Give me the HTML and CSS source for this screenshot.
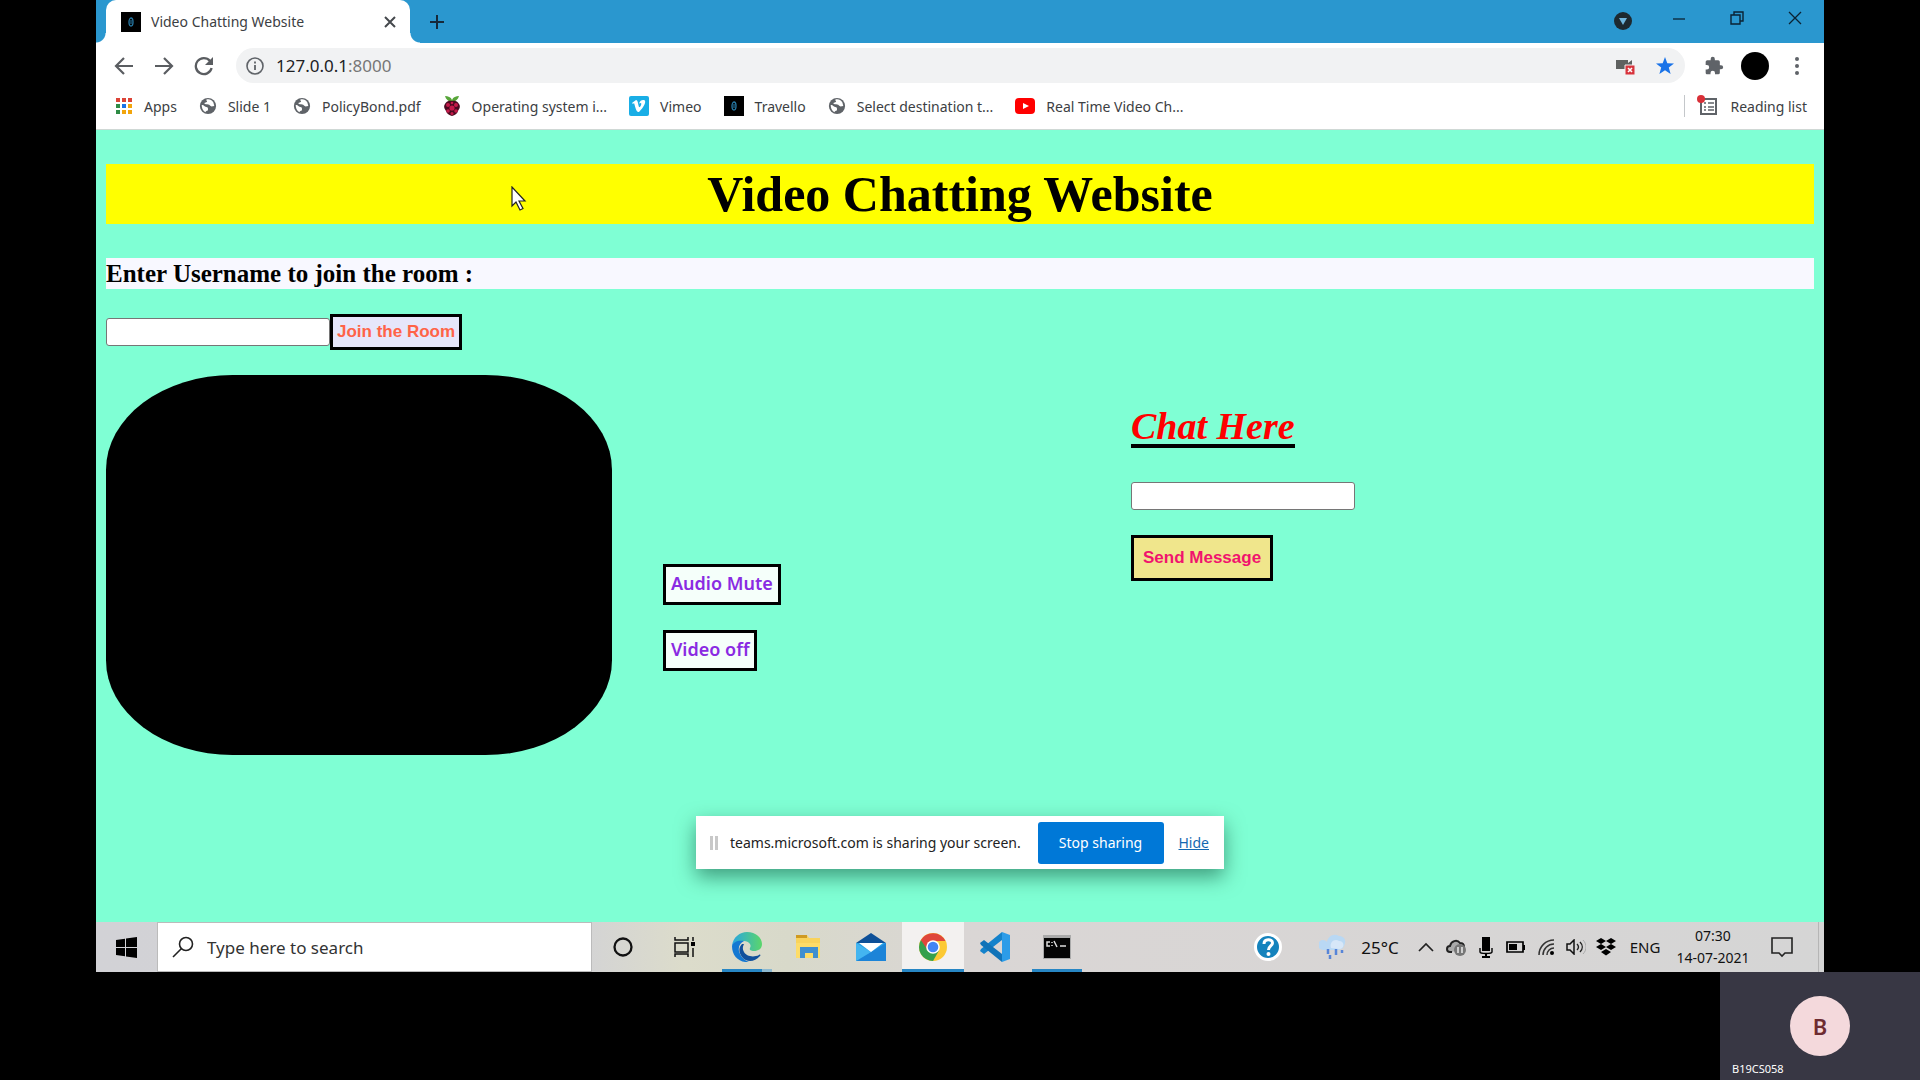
FILE: index.html
```html
<!DOCTYPE html>
<html lang="en">
<head>
<meta charset="utf-8">
<title>Video Chatting Website</title>
<link rel="stylesheet" href="styles.css">
</head>
<body>
<svg class="defs" aria-hidden="true">
  <symbol id="globe" viewBox="0 0 20 20"><circle cx="10" cy="10" r="9" fill="#5f6368"/><path d="M3 9c3 0 3 2 5 2s2 1 2 3-2 1-3 3C4 15 3 12 3 9zM8 3c3-1 6 0 8 3l1 4c-2 0-3 1-4 0s-2-2-4-2-3 0-3-1 3-1 3-2-1-1-1-2z" fill="#fff"/></symbol>
  <symbol id="zero" viewBox="0 0 20 20"><path fill="#000" d="M0 0h20v20H0z"/><ellipse cx="10" cy="10" rx="2" ry="4" fill="none" stroke="#277ba8" stroke-width="1.3"/><path d="M10 8v4" stroke="#277ba8"/></symbol>
</svg>
<div class="stage">
  <main class="screen">
    <header class="tabs">
      <div class="tab">
        <svg class="i20"><use href="#zero"/></svg>
        <span class="tab-title">Video Chatting Website</span>
        <button class="plain" aria-label="Close tab"><svg width="12" height="12" viewBox="0 0 12 12"><path d="M1 1l10 10M11 1L1 11" stroke="#45494d" stroke-width="2"/></svg></button>
      </div>
      <button class="plain new-tab" aria-label="New tab"><svg width="16" height="16" viewBox="0 0 16 16"><path d="M8 1v14M1 8h14" stroke="#16293a" stroke-width="2"/></svg></button>
      <div class="window-buttons">
        <button class="plain media" aria-label="Media"><svg width="18" height="18" viewBox="0 0 18 18"><circle cx="9" cy="9" r="9" fill="#1d2930"/><path d="M5 6h8l-4 7z" fill="#6fb5dc"/></svg></button>
        <button class="plain" aria-label="Minimize"><svg width="14" height="14" viewBox="0 0 14 14"><path d="M1 8h12" stroke="#0b2233" stroke-width="1.3"/></svg></button>
        <button class="plain" aria-label="Restore"><svg width="14" height="14" viewBox="0 0 14 14"><path d="M1 4h9v9H1zM4 4V1h9v9h-3" fill="none" stroke="#0b2233" stroke-width="1.4"/></svg></button>
        <button class="plain" aria-label="Close"><svg width="14" height="14" viewBox="0 0 14 14"><path d="M1 1l12 12M13 1L1 13" stroke="#0b2233" stroke-width="1.3"/></svg></button>
      </div>
    </header>
    <nav class="toolbar">
      <button class="plain" aria-label="Back"><svg width="20" height="20" viewBox="0 0 20 20"><path d="M19 10H3M10 2l-8 8 8 8" fill="none" stroke="#5a5d61" stroke-width="2.2"/></svg></button>
      <button class="plain" aria-label="Forward"><svg width="20" height="20" viewBox="0 0 20 20"><path d="M1 10h16M10 2l8 8-8 8" fill="none" stroke="#5a5d61" stroke-width="2.2"/></svg></button>
      <button class="plain" aria-label="Reload"><svg width="20" height="20" viewBox="0 0 20 20"><path d="M16 5a8 8 0 1 0 1.6 7" fill="none" stroke="#5a5d61" stroke-width="2.3"/><path d="M19 1v8h-8z" fill="#5a5d61"/></svg></button>
      <div class="address">
        <svg width="18" height="18" viewBox="0 0 18 18"><circle cx="9" cy="9" r="8" fill="none" stroke="#5f6368" stroke-width="1.6"/><path d="M9 8v5M9 4.500v2" stroke="#5f6368" stroke-width="1.8"/></svg>
        <span class="url">127.0.0.1<span class="port">:8000</span></span>
        <svg class="camera" width="20" height="20" viewBox="0 0 20 20"><path d="M0 4h12v3l4-3v9H0z" fill="#5f6160"/><path d="M9 9h10v10H9z" fill="#d8343c" stroke="#f1f2f2"/><path d="M12 12l4 4M16 12l-4 4" stroke="#fff" stroke-width="1.6"/></svg>
        <svg width="20" height="20" viewBox="0 0 20 20"><path d="M10 1l2.300 6.200 6.700.3-5.200 4.100 1.800 6.400L10 14.300 4.400 18l1.800-6.400L1 7.500l6.700-.3z" fill="#1a73e8"/></svg>
      </div>
      <button class="plain puzzle" aria-label="Extensions"><svg width="20" height="20" viewBox="0 0 24 24"><path fill="#5f6368" d="M20.500 11H19V7a2 2 0 0 0-2-2h-4V3.500a2.500 2.500 0 0 0-5 0V5H4a2 2 0 0 0-2 2v3.800h1.500a2.700 2.700 0 0 1 0 5.400H2V20c0 1.100.9 2 2 2h3.800v-1.500a2.700 2.700 0 0 1 5.400 0V22H17a2 2 0 0 0 2-2v-4h1.500a2.500 2.500 0 0 0 0-5z"/></svg></button>
      <button class="plain profile" aria-label="Profile"></button>
      <button class="plain menu" aria-label="Menu"><svg width="4" height="18" viewBox="0 0 4 18"><circle cx="2" cy="2" r="2"/><circle cx="2" cy="9" r="2"/><circle cx="2" cy="16" r="2"/></svg></button>
    </nav>
    <nav class="bookmarks">
      <a href="#"><svg width="18" height="18" viewBox="0 0 18 18"><path fill="#dc4437" d="M1 1h4v4H1zM7 1h4v4H7zM13 1h4v4h-4z"/><path fill="#2e8b45" d="M1 7h4v4H1zM1 13h4v4H1z"/><path fill="#1a73e8" d="M7 7h4v4H7z"/><path fill="#f2a50c" d="M13 7h4v4h-4zM7 13h4v4H7zM13 13h4v4h-4z"/></svg>Apps</a>
      <a href="#"><svg class="i18"><use href="#globe"/></svg>Slide 1</a>
      <a href="#"><svg class="i18"><use href="#globe"/></svg>PolicyBond.pdf</a>
      <a href="#"><svg width="18" height="20" viewBox="0 0 18 20"><path d="M9 5C6 6 3 4 2 0c3 0 6 1 7 4 1-3 4-4 7-4-1 4-4 6-7 5z" fill="#57a639"/><path d="M9 5c5-1 6 2 7 3 2 3 0 5-1 7-1 3-3 4-6 5-3-1-5-2-6-5-1-2-3-4-1-7 1-1 2-4 7-3z" fill="#4b0a20"/><g fill="#c51a4a"><circle cx="9" cy="12" r="2.600"/><circle cx="5" cy="9" r="2"/><circle cx="13" cy="9" r="2"/><circle cx="5" cy="15" r="1.800"/><circle cx="13" cy="15" r="1.800"/><circle cx="9" cy="17.500" r="1.500"/><circle cx="9" cy="7" r="1.300"/></g></svg>Operating system i...</a>
      <a href="#"><svg width="20" height="20" viewBox="0 0 20 20"><rect y="0" width="20" height="20" rx="2" fill="#19aee6"/><path d="M3 7l4-3c2 0 2 4 3 7 1 1 3-3 2-4l-2 .5c1-3 3-4 5-3.500 3 1 0 7-5 12-3 1-4-7-5-9L4 8z" fill="#fff"/></svg>Vimeo</a>
      <a href="#"><svg class="i20"><use href="#zero"/></svg>Travello</a>
      <a href="#"><svg class="i18"><use href="#globe"/></svg>Select destination t...</a>
      <a href="#"><svg width="20" height="20" viewBox="0 0 20 20"><rect y="2" width="20" height="16" rx="4" fill="#f00"/><path d="M8 7l6 3-6 3z" fill="#fff"/></svg>Real Time Video Ch...</a>
      <a href="#" class="reading"><svg width="22" height="22" viewBox="0 0 22 22"><path d="M4 4h15v15H4z" fill="none" stroke="#5f6368" stroke-width="2"/><path d="M7 8h2M7 12h2M7 15h2M11 8h6M11 12h6M11 15h6" stroke="#5f6368" stroke-width="1.500"/><circle cx="4" cy="4" r="4" fill="#d93038"/></svg>Reading list</a>
    </nav>

    <section class="page">
      <h1>Video Chatting Website</h1>
      <h3><label for="username">Enter Username to join the room :</label></h3>
      <form class="join">
        <input class="field" id="username" type="text">
        <button class="btn join-btn" type="button">Join the Room</button>
      </form>
      <div class="room">
        <div class="video"></div>
        <div class="controls">
          <button class="btn control" type="button">Audio Mute</button>
          <button class="btn control" type="button">Video off</button>
        </div>
        <form class="chat">
          <h2><label for="message">Chat Here</label></h2>
          <input class="field" id="message" type="text">
          <button class="btn send" type="button">Send Message</button>
        </form>
      </div>
      <svg class="cursor" width="16" height="25" viewBox="0 0 16 25"><path d="M1 1v19l4-4 4 8 3-1.500-4-7.500h6z" fill="#fff" stroke="#222" stroke-width="1.200"/></svg>
      <aside class="sharing">
        <span class="grip"></span>
        <span class="sharing-text">teams.microsoft.com is sharing your screen.</span>
        <button class="stop" type="button">Stop sharing</button>
        <a class="hide" href="#">Hide</a>
      </aside>
    </section>

    <footer class="taskbar">
      <button class="plain start" aria-label="Start"><svg width="21" height="21" viewBox="0 0 21 21"><path d="M0 3l9-1.300V10H0zM10 1.500L21 0v10H10zM0 11h9v8.300L0 18zM10 11h11v10l-11-1.500z"/></svg></button>
      <div class="search">
        <svg width="22" height="22" viewBox="0 0 22 22"><circle cx="14" cy="8" r="6.500" fill="none" stroke="#222" stroke-width="1.600"/><path d="M9.500 12.500L1 21" stroke="#222" stroke-width="1.600"/></svg>
        <input type="text" placeholder="Type here to search" aria-label="Search">
      </div>
      <div class="apps">
        <button class="plain" aria-label="Cortana"><svg width="20" height="20" viewBox="0 0 20 20"><circle cx="10" cy="10" r="8.500" fill="none" stroke="#111" stroke-width="2.300"/></svg></button>
        <button class="plain" aria-label="Task view"><svg width="22" height="20" viewBox="0 0 22 20"><path d="M1 0v3h13V0M1 6h13v9H1zM1 20v-3h13v3M19 0v4M19 11v9" fill="none" stroke="#111" stroke-width="1.500"/><path d="M17 5h4v4h-4z"/></svg></button>
        <button class="plain open partial" aria-label="Edge"><svg width="30" height="30" viewBox="0 0 30 30"><defs><linearGradient id="eg"><stop offset="0" stop-color="#2aa6e0"/><stop offset="1" stop-color="#5bd66b"/></linearGradient></defs><path d="M0 14C1 5 8 0 15 0c9 0 15 6 15 12 0 5-4 7-8 7-3 0-5-1-4-3 2-3-1-7-6-7C6 9 1 11 0 14z" fill="url(#eg)"/><path d="M0 14c1-4 6-6 12-5-4 2-6 6-5 10 1 5 5 9 10 11C7 31 0 24 0 14z" fill="#1478d2"/><path d="M10 12c-4 4-3 9 0 13 4 5 12 6 18-1 1-1 0-2-1-1-6 3-13 1-15-3-2-3-1-6 0-8z" fill="#11509c"/></svg></button>
        <button class="plain" aria-label="File Explorer"><svg width="30" height="26" viewBox="0 0 30 26"><path d="M2 3l1-2h10l2 3h11v20H2z" fill="#f9d35b"/><path d="M2 1h11v3H2z" fill="#cf9a22"/><path d="M2 9h24v15H2z" fill="#fddc68"/><path d="M6 24V13h18v11h-5v-5h-8v5z" fill="#3f8fd0"/></svg></button>
        <button class="plain" aria-label="Mail"><svg width="30" height="28" viewBox="0 0 30 28"><path d="M0 10L15 0l15 10z" fill="#0d5098"/><path d="M0 10h30v18H0z" fill="#28a2e6"/><path d="M0 28L30 10v18z" fill="#1c84d8"/><path d="M0 28V10l15 9z" fill="#44b5f0"/><path d="M3 10h24L15 19z" fill="#fff"/></svg></button>
        <button class="plain open active" aria-label="Chrome"><svg width="28" height="28" viewBox="0 0 28 28"><circle cx="14" cy="14" r="14" fill="#fcc934"/><path d="M14 14L1.900 7A14 14 0 0 0 14 28l6-10.500z" fill="#34a04d"/><path d="M1.900 7A14 14 0 0 1 26.500 8H14l-5.500 9z" fill="#df463b"/><circle cx="14" cy="14" r="6.800" fill="#fff"/><circle cx="14" cy="14" r="5.300" fill="#4285f4"/></svg></button>
        <button class="plain" aria-label="Visual Studio Code"><svg width="30" height="30" viewBox="0 0 30 30"><path d="M22 0v8L4 22l-4-3 1-2z" fill="#1482cb"/><path d="M22 30v-8L4 8l-4 3 1 2z" fill="#1173b8"/><path d="M22 0l8 3v24l-8 3z" fill="#2c9ce8"/></svg></button>
        <button class="plain open" aria-label="Command Prompt"><svg width="28" height="24" viewBox="0 0 28 24"><path d="M0 0h28v24H0z" fill="#aaa"/><path d="M1 3h26v20H1z" fill="#050505"/><path d="M7 7H4v4h3M9 7v1M9 10v1M11 6l3 6M17 11h6" fill="none" stroke="#ddd" stroke-width="1.500"/></svg></button>
      </div>
      <div class="tray">
        <svg class="help" width="28" height="28" viewBox="0 0 28 28"><circle cx="14" cy="14" r="12.500" fill="#1583bd" stroke="#fff" stroke-width="3"/><path d="M10 11c0-5.500 8.500-5.500 8.500-1 0 3-4 3-4 7" fill="none" stroke="#fff" stroke-width="3"/><circle cx="14.500" cy="21" r="2" fill="#fff"/></svg>
        <svg class="weather" width="30" height="30" viewBox="0 0 30 30"><path d="M4 18a5 5 0 0 1 0-10c2 0 3 1 4 2 1-6 7-9 12-6 4 0 7 3 6 7-1 5-4 7-8 7z" fill="#b9d8f4"/><path d="M12 16c-2-6 4-10 8-7 6 0 6 8 0 8z" fill="#d7e7f8"/><path d="M9 17v5M17 17v6M11 23v4M23 18v3" stroke="#5785d8" stroke-width="2.500"/></svg>
        <span class="temp">25°C</span>
        <span class="cell"><svg width="16" height="10" viewBox="0 0 16 10"><path d="M1 9l7-7 7 7" fill="none" stroke="#222" stroke-width="1.700"/></svg></span>
        <span class="cell"><svg width="20" height="18" viewBox="0 0 20 18"><path d="M6 14H4c-4 0-4-6 0-6 1-5 7-7 10-3 2 0 4 1 4 4" fill="#aaa" stroke="#222" stroke-width="2"/><circle cx="14" cy="12" r="6" fill="#777"/><path d="M12 9v6M16 9v6" stroke="#fff" stroke-width="1.300"/></svg></span>
        <span class="cell"><svg width="14" height="22" viewBox="0 0 14 22"><path d="M3 1h8v14H3zM6 17h2v4H6zM3 20h8v2H3z"/><path d="M1 12v4c0 2 12 2 12 0v-4" fill="none" stroke="#000" stroke-width="1.400"/></svg></span>
        <span class="cell"><svg width="20" height="12" viewBox="0 0 20 12"><path d="M1 1h16v10H1z" fill="none" stroke="#000" stroke-width="1.700"/><path d="M3 3h8v6H3zM17 4h2v5h-2z"/></svg></span>
        <span class="cell"><svg width="18" height="18" viewBox="0 0 18 18"><path d="M2 17A15 15 0 0 1 17 2M6 17A11 11 0 0 1 17 6M10 17a7 7 0 0 1 7-7" fill="none" stroke="#333" stroke-width="1.500"/><circle cx="15" cy="15" r="2"/></svg></span>
        <span class="cell"><svg width="20" height="16" viewBox="0 0 20 16"><path d="M1 5h3l4-4v14l-4-4H1z" fill="none" stroke="#111" stroke-width="1.500"/><path d="M11 5c2 2 2 4 0 6M14 3c3 3 3 7 0 10" fill="none" stroke="#222" stroke-width="1.400"/><path d="M17 1c4 4 4 10 0 14" fill="none" stroke="#aaa"/></svg></span>
        <span class="cell"><svg width="20" height="18" viewBox="0 0 20 18"><path d="M5 0l5 3-5 3-5-3zM15 0l5 3-5 3-5-3zM5 6l5 3-5 3-5-3zM15 6l5 3-5 3-5-3zM10 11l5 3-5 3.500L5 14z"/></svg></span>
        <span class="lang">ENG</span>
        <span class="clock"><span>07:30</span><span>14-07-2021</span></span>
        <span class="notice"><svg width="22" height="21" viewBox="0 0 22 21"><path d="M1 1h20v15h-7l-3 3-3-3H1z" fill="none" stroke="#222" stroke-width="1.600"/></svg></span>
      </div>
    </footer>
  </main>
  <aside class="participant">
    <div class="avatar">B</div>
    <span class="name">B19CS058</span>
  </aside>
</div>
</body>
</html>
```
FILE: styles.css
```css
* { box-sizing: border-box; }

body {
  margin: 0;
  background: #000;
  color: #3c4043;
  font-family: "Noto Sans", "Open Sans", sans-serif;
  font-size: 14px;
}

svg { display: block; flex: none; }
.defs { position: absolute; width: 0; height: 0; }
.i18 { width: 18px; height: 18px; }
.i20 { width: 20px; height: 20px; }

.plain {
  display: flex;
  align-items: center;
  justify-content: center;
  padding: 0;
  border: 0;
  background: none;
}

.stage {
  display: flex;
  flex-direction: column;
  min-height: 100vh;
}

.screen {
  flex: 1;
  display: flex;
  flex-direction: column;
  margin: 0 5%;
  background: #fff;
}

/* Browser frame */
.tabs {
  display: flex;
  height: 43px;
  padding-left: 10px;
  background: #2a97cf;
}

.tab {
  position: relative;
  display: flex;
  align-items: center;
  width: 304px;
  padding: 0 14px 0 15px;
  gap: 10px;
  border-radius: 10px 10px 0 0;
  background: #fff;
}

.tab::before,
.tab::after {
  content: "";
  position: absolute;
  bottom: 0;
  width: 10px;
  height: 10px;
}
.tab::before { left: -10px; background: radial-gradient(circle at 0 0, transparent 9px, #fff 10px); }
.tab::after { right: -10px; background: radial-gradient(circle at 100% 0, transparent 9px, #fff 10px); }
.tab-title { flex: 1; }
.new-tab { margin-left: 19px; }

.window-buttons {
  display: flex;
  margin-left: auto;
  height: 36px;
}
.window-buttons .plain { width: 58px; }
.window-buttons .media { width: 54px; padding-top: 6px; }

.toolbar {
  display: flex;
  align-items: center;
  height: 45px;
  padding: 0 25px 0 18px;
}
.toolbar > .plain:nth-child(-n+3) { margin-right: 20px; }

.address {
  flex: 1;
  display: flex;
  align-items: center;
  height: 35px;
  margin-left: 2px;
  padding: 0 10px 0 10px;
  gap: 12px;
  border-radius: 18px;
  background: #f1f2f3;
}
.url { flex: 1; color: #202124; font-size: 17px; }
.port { color: #777; }
.camera { margin-right: 7px; }
.puzzle { margin-left: 19px; }
.profile { width: 28px; height: 28px; margin: 0 26px 0 17px; border-radius: 50%; background: #000; }
.menu { fill: #5f6368; }

.bookmarks {
  display: flex;
  align-items: center;
  height: 42px;
  padding: 0 17px 5px 19px;
  gap: 22px;
  border-bottom: 1px solid #cfd8d5;
}
.bookmarks a {
  display: flex;
  align-items: center;
  gap: 11px;
  color: #3c4043;
  text-decoration: none;
  white-space: nowrap;
}
.bookmarks .reading {
  margin-left: auto;
  padding-left: 12px;
  border-left: 1px solid #c4c7ca;
}

/* Chat page */
.page {
  position: relative;
  flex: 1;
  padding: 34px 10px 40px;
  background: #7fffd4;
  color: #000;
  font-family: "Liberation Serif", serif;
}

h1 {
  margin: 0 0 34px;
  background: #ff0;
  font-size: 50px;
  line-height: 60px;
  text-align: center;
}

h3 {
  margin: 0 0 25px;
  background: #f8f8ff;
  font-size: 25px;
  line-height: 31px;
}

.join { display: flex; align-items: center; margin-bottom: 25px; }

.field {
  width: 224px;
  height: 28px;
  border: 1px solid #767676;
  border-radius: 3px;
  background: #fff;
}

.btn {
  border: 3px solid #000;
  padding: 0 4px;
  font-weight: bold;
  white-space: nowrap;
}

.join-btn {
  height: 36px;
  background: #e6e6fa;
  color: #ff6347;
  font-family: "Liberation Sans", sans-serif;
  font-size: 17px;
}

.room {
  display: grid;
  grid-template-columns: 557fr 468fr 683fr;
  align-items: start;
}

.video {
  width: calc(100% - 51px);
  aspect-ratio: 4 / 3;
  border-radius: 25%;
  background: #000;
}

.controls {
  display: flex;
  flex-direction: column;
  align-items: flex-start;
  gap: 25px;
  padding-top: 189px;
}
.control {
  height: 41px;
  padding: 0 5px 3px;
  background: #f5fffa;
  color: #8a2be2;
  font-family: "Noto Sans", sans-serif;
  font-size: 18px;
  font-weight: 600;
}

.chat { display: flex; flex-direction: column; align-items: flex-start; padding-top: 34px; }

h2 {
  margin: 0 0 34px;
  border-bottom: 4px solid #000;
  color: #f00;
  font-size: 38px;
  font-style: italic;
  line-height: 35px;
}

.send {
  height: 46px;
  margin-top: 25px;
  padding: 0 9px;
  background: #f0e68c;
  color: #f0146e;
  font-family: "Liberation Sans", sans-serif;
  font-size: 17px;
}

.cursor { position: absolute; left: 415px; top: 56px; }

.sharing {
  position: absolute;
  left: 50%;
  bottom: 53px;
  transform: translateX(-50%);
  display: flex;
  align-items: center;
  width: 528px;
  height: 53px;
  padding: 0 15px 0 14px;
  background: #fff;
  box-shadow: 0 8px 20px rgba(0, 60, 40, 0.5);
  color: #222;
  font-family: "Noto Sans", sans-serif;
  white-space: nowrap;
}
.grip { width: 8px; height: 14px; margin-right: 12px; border: solid #c8c8c8; border-width: 0 3px; }
.sharing-text { flex: 1; }
.stop {
  width: 126px;
  height: 42px;
  border: 0;
  border-radius: 3px;
  background: #0078d7;
  color: #fff;
  font: inherit;
}
.hide { margin-left: 15px; color: #1468b0; }

/* Taskbar */
.taskbar {
  display: flex;
  height: 50px;
  background: linear-gradient(90deg, #d2d2d6 0, #d3d3d5 28%, #dcdccb 34%, #d8d9ca 40%, #dad6d5 50%, #d5d5d5 100%);
  color: #111;
}
.start { width: 61px; }
.search {
  display: flex;
  align-items: center;
  width: 435px;
  padding: 0 14px;
  gap: 13px;
  border: 1px solid #bbb;
  background: #fff;
}
.search input {
  flex: 1;
  min-width: 0;
  padding: 0;
  border: 0;
  background: none;
  font: 17px "Noto Sans", sans-serif;
}
.search input::placeholder { color: #333; opacity: 1; }

.apps { display: flex; }
.apps .plain { position: relative; width: 62px; }
.apps .active { background: #f3f1f0; }
.open::after {
  content: "";
  position: absolute;
  right: 6px;
  bottom: 0;
  left: 6px;
  height: 3px;
  background: #2786c4;
}
.active::after { right: 0; left: 0; }
.partial::after { background: linear-gradient(90deg, #2786c4 80%, #8db9d0 80%); }

.tray { display: flex; align-items: center; margin-left: auto; padding-right: 5px; }
.help { margin-right: 37px; }
.temp { width: 62px; font-size: 17px; text-align: center; }
.cell { display: flex; justify-content: center; width: 30px; }
.lang { width: 48px; font-size: 15px; text-align: center; }
.clock { display: flex; flex-direction: column; width: 88px; font-size: 14px; line-height: 22px; text-align: center; }
.notice {
  display: flex;
  align-items: center;
  justify-content: center;
  align-self: stretch;
  width: 62px;
  padding-right: 11px;
  border-right: 1px solid #b5b5b5;
}

/* Participant tile */
.participant {
  position: relative;
  align-self: flex-end;
  display: flex;
  align-items: center;
  justify-content: center;
  width: 200px;
  height: 108px;
  background: #383744;
}
.avatar {
  width: 60px;
  height: 60px;
  border-radius: 50%;
  background: #f4d9dc;
  color: #6e2c31;
  font-size: 22px;
  font-weight: 600;
  line-height: 60px;
  text-align: center;
}
.name { position: absolute; left: 12px; bottom: 4px; color: #fff; font-size: 11px; }
```
